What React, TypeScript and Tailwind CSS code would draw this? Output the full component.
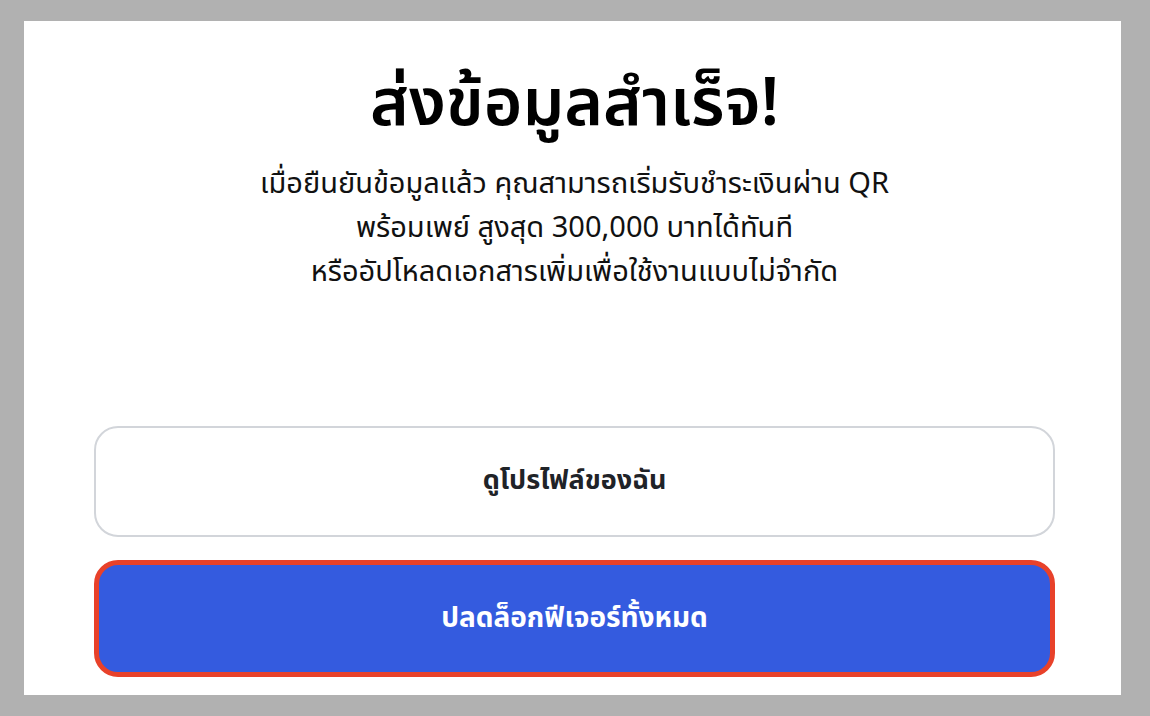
export default function App() {
  return (
    <div className="h-screen w-full bg-[#b1b1b1] pt-[21px] pl-[24px] pr-[29px] pb-[21px] font-['Noto_Sans','Noto_Sans_Thai',sans-serif]">
      <div className="flex h-full flex-col bg-white pl-[70px] pr-[66px] pb-[18px]">
        <div className="flex flex-col items-center pt-[36px] text-center">
          <h1 className="text-[66px] font-semibold leading-[84px] text-black">ส่งข้อมูลสำเร็จ!</h1>
          <p className="mt-[19px] text-[29px] leading-[44px] text-[#111]">
            เมื่อยืนยันข้อมูลแล้ว คุณสามารถเริ่มรับชำระเงินผ่าน QR
            <br />
            พร้อมเพย์ สูงสุด 300,000 บาทได้ทันที
            <br />
            หรืออัปโหลดเอกสารเพิ่มเพื่อใช้งานแบบไม่จำกัด
          </p>
        </div>
        <div className="mt-auto flex flex-col gap-[23px]">
          <button className="h-[111px] w-full rounded-[24px] border-2 border-[#d2d5da] bg-white pb-[4px] text-[27px] font-bold text-[#1f2328]">
            ดูโปรไฟล์ของฉัน
          </button>
          <button className="h-[117px] w-full rounded-[24px] border-[5px] border-[#e8412a] bg-[#345bdf] pb-[5px] text-[28px] font-bold text-white">
            ปลดล็อกฟีเจอร์ทั้งหมด
          </button>
        </div>
      </div>
    </div>
  )
}
